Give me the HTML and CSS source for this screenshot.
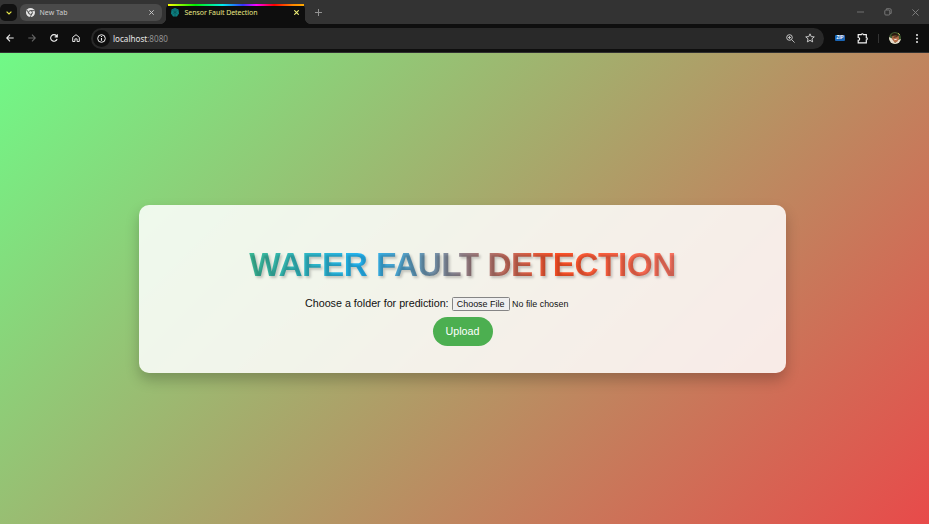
FILE: index.html
```html
<!DOCTYPE html>
<html lang="en">
<head>
<meta charset="utf-8">
<title>Sensor Fault Detection</title>
<link rel="stylesheet" href="styles.css">
</head>
<body>
<header class="browser">
  <div class="tabs">
    <div class="tab-search"><svg width="6" height="4" viewBox="0 0 6 4"><path d="M.6.6 3 3 5.400.6" fill="none" stroke="#e8e84a" stroke-width="1.2"/></svg></div>
    <div class="tab tab-idle">
      <svg class="favicon" width="9" height="9" viewBox="0 0 18 18"><circle cx="9" cy="9" r="9" fill="#e4e4e4"/><circle cx="9" cy="9" r="3.800" fill="#e4e4e4" stroke="#424242" stroke-width="1.700"/><path d="M9 5.200h8M5.700 10.900l-4-7M12.300 10.900l-4 7" stroke="#424242" stroke-width="1.700"/></svg>
      <span class="tab-title">New Tab</span>
      <svg width="5" height="5" viewBox="0 0 5 5"><path d="M.3.3l4.400 4.400M4.700.3.3 4.700" stroke="#d0d0d0" stroke-width=".9"/></svg>
    </div>
    <div class="tab tab-active">
      <svg class="favicon" width="8" height="9" viewBox="0 0 16 18"><path d="M8 0l7 3 1 8-4 6H4l-4-6 1-8z" fill="#0c7f80"/><path d="M3 5l5 3 5-3M8 8v8M3 12l5-4 5 4M5 2l3 3 3-3" fill="none" stroke="#075153" stroke-width="1.400"/></svg>
      <span class="tab-title">Sensor Fault Detection</span>
      <svg width="5" height="5" viewBox="0 0 5 5"><path d="M.3.3l4.400 4.400M4.700.3.3 4.700" stroke="#f0f078" stroke-width="1.100"/></svg>
    </div>
    <svg class="new-tab" width="7" height="7" viewBox="0 0 7 7"><path d="M3.500 0v7M0 3.500h7" stroke="#929292"/></svg>
    <div class="window-controls">
      <svg width="7" height="8" viewBox="0 0 7 8"><path d="M0 4h7" stroke="#707070"/></svg>
      <svg width="8" height="8" viewBox="0 0 8 8"><rect x=".8" y="2" width="5" height="5" rx="1" fill="none" stroke="#777"/><path d="M2.500 1.800V.7h3.300q1.400 0 1.400 1.400v3.300H6" fill="none" stroke="#777"/></svg>
      <svg width="7" height="7" viewBox="0 0 7 7"><path d="M.4.4l6.200 6.200M6.600.4.4 6.600" stroke="#858585" stroke-width=".9"/></svg>
    </div>
  </div>
  <div class="toolbar">
    <nav class="nav">
      <svg width="8" height="8" viewBox="0 0 8 8"><path d="M7.700 4H.8M4 .7.7 4 4 7.300" fill="none" stroke="#eee" stroke-width="1.100"/></svg>
      <svg width="8" height="8" viewBox="0 0 8 8"><path d="M.3 4h6.900M4 .7 7.300 4 4 7.300" fill="none" stroke="#666" stroke-width="1.100"/></svg>
      <svg width="8" height="8" viewBox="0 0 8 8"><path d="M7.100 5A3.300 3.300 0 1 1 6.500 1.800L7.200 2.600M7.300.3v2.600H4.700" fill="none" stroke="#eee" stroke-width="1.100"/></svg>
      <svg width="8" height="8" viewBox="0 0 8 8"><path d="M.7 7.500V3.300L4 .7l3.300 2.600v4.200H5.100V4.900H2.900v2.600z" fill="none" stroke="#e4e4e4"/></svg>
    </nav>
    <div class="address">
      <span class="site-info"><svg width="9" height="9" viewBox="0 0 9 9"><circle cx="4.500" cy="4.500" r="3.800" fill="none" stroke="#eee"/><path d="M4.500 4v2.700M4.500 2.100v1" stroke="#eee" stroke-width="1.100"/></svg></span>
      <span class="url">localhost<span class="port">:8080</span></span>
      <svg class="magnify" width="9" height="9" viewBox="0 0 9 9"><circle cx="3.500" cy="3.500" r="2.800" fill="none" stroke="#c6c6c6"/><path d="M5.600 5.600 8.600 8.600M2 3.500h3M3.500 2v3" stroke="#c6c6c6" stroke-width=".9"/></svg>
      <svg width="10" height="10" viewBox="0 0 18 18"><path d="M9 1.500l2.200 5 5.500.5-4.200 3.600 1.300 5.400L9 13.200 4.200 16l1.300-5.400L1.300 7l5.500-.5z" fill="none" stroke="#d0d0d0" stroke-width="1.700"/></svg>
    </div>
    <span class="zip">ZIP</span>
    <svg class="extensions" width="11" height="11" viewBox="0 0 11 11"><path d="M1.200 1.700h3c.1-1.300 2.200-1.300 2.300 0h2.800v3c1.300.1 1.300 2.200 0 2.300v2.800H1.200V7.400c1.900 0 1.900-2.900 0-2.900z" fill="none" stroke="#f2f2f2" stroke-width="1.200"/></svg>
    <span class="divider"></span>
    <svg class="avatar" width="12" height="12" viewBox="0 0 12 12"><defs><clipPath id="face"><circle cx="6" cy="6" r="6"/></clipPath></defs><g clip-path="url(#face)"><path fill="#3f5a30" d="M0 0h12v12H0z"/><path fill="#e8dccc" d="M0 5l4 2 2 4 3-3 3-1v5H0z"/><path fill="#b8704a" d="M3.500 3.500 9.500 3l.5 4-2 3-2.500.5L3 7z"/><path d="M2 4Q3 .8 6 1t4 3L6 3.500z" fill="#29190f"/><path d="M4.500 5.200l4-.6" stroke="#3a2016"/><path d="M5.200 7.700l2.500-.4" stroke="#fff" stroke-width=".8"/><path d="M9 1l2 2" stroke="#d9c45a"/></g></svg>
    <svg class="menu" width="2" height="9" viewBox="0 0 2 9"><g fill="#eee"><circle cx="1" cy="1.100" r="1"/><circle cx="1" cy="4.500" r="1"/><circle cx="1" cy="7.900" r="1"/></g></svg>
  </div>
</header>
<main class="page">
  <section class="card">
    <h1 class="title">WAFER FAULT DETECTION</h1>
    <form class="form">
      <div class="file-row">
        <label class="label">Choose a folder for prediction:</label>
        <button class="choose" type="button">Choose File</button>
        <span class="status">No file chosen</span>
      </div>
      <button class="upload" type="button">Upload</button>
    </form>
  </section>
</main>
</body>
</html>
```
FILE: styles.css
```css
* { box-sizing: border-box; }
body {
  margin: 0;
  height: 524px;
  overflow: hidden;
  display: flex;
  flex-direction: column;
  font-family: "Liberation Sans", Arial, sans-serif;
}
svg { display: block; flex: none; }
.browser {
  height: 53px;
  flex: none;
  background: #0e0e0e;
  border-bottom: 1px solid #303030;
  font-family: "Noto Sans", sans-serif;
}
.tabs { display: flex; height: 24px; background: #333; }
.tab-search {
  width: 17px;
  height: 17px;
  margin: 4px 3px 0 0;
  border-radius: 5px;
  background: #111;
  display: grid;
  place-items: center;
}
.tab { display: flex; align-items: center; font-size: 7px; }
.tab-title { flex: 1; white-space: nowrap; }
.tab-idle {
  width: 142px;
  height: 17px;
  margin-top: 4px;
  padding: 0 8px 0 5.500px;
  gap: 5px;
  border-radius: 6px;
  background: #4a4a4a;
  color: #cfcfcf;
}
.tab-active {
  width: 139px;
  height: 20px;
  margin: 4px 0 0 4px;
  padding: 0 6px 3px 5px;
  gap: 5.500px;
  background: #0e0e0e;
  color: #e8e884;
  border-radius: 5px 5px 0 0;
  position: relative;
}
.tab-active .tab-title { letter-spacing: -.06px; }
.tab-active::before {
  content: "";
  position: absolute;
  left: 2px;
  right: 1px;
  top: 0;
  height: 1.500px;
  background: linear-gradient(90deg, #ff0, #0e0 20%, #0ee 40%, #33f 55%, #f0f 65%, #f00 78%, #f80 92%, #fa0);
}
.tab-active::after {
  content: "";
  position: absolute;
  left: -5px;
  right: -5px;
  bottom: 0;
  height: 5px;
  background:
    radial-gradient(circle at 0 0, transparent 4.600px, #0e0e0e 5px) left / 5px 5px no-repeat,
    radial-gradient(circle at 100% 0, transparent 4.600px, #0e0e0e 5px) right / 5px 5px no-repeat;
}
.new-tab { margin: 9px 0 0 10px; }
.window-controls {
  display: flex;
  align-items: center;
  gap: 20px;
  margin-left: auto;
  padding-right: 10px;
}
.toolbar { display: flex; align-items: center; height: 28px; padding-right: 11.500px; }
.nav { display: flex; gap: 14px; padding-left: 5.500px; width: 91px; }
.address {
  width: 733px;
  height: 21px;
  padding: 0 9.500px 0 1.500px;
  border-radius: 11px;
  background: #292929;
  display: flex;
  align-items: center;
}
.site-info {
  width: 17px;
  height: 17px;
  border-radius: 50%;
  background: #0f0f0f;
  display: grid;
  place-items: center;
}
.url { margin-left: 3.500px; flex: 1; color: #e6e6e6; font-size: 8.100px; }
.port { color: #929292; }
.magnify { margin-right: 10px; }
.zip {
  width: 10px;
  height: 6px;
  margin-left: 11px;
  border-radius: 1px;
  background: #1a65b5;
  color: #fff;
  font: bold 4.500px/6px "Liberation Sans", sans-serif;
  text-align: center;
}
.extensions { margin-left: 12px; }
.divider { width: 1px; height: 9px; margin: 0 10px; background: #333; }
.menu { margin-left: auto; }
.page {
  flex: 1;
  padding-right: 4px;
  display: grid;
  place-items: center;
  background: linear-gradient(135deg, #70f987, #e84a4a);
}
.card {
  width: 647px;
  height: 168px;
  padding: 39px 26px 0;
  border-radius: 10px;
  background: rgba(255, 255, 255, .86);
  box-shadow: 0 7px 14px rgba(0, 0, 0, .22);
  text-align: center;
}
.title {
  margin: 0;
  font-size: 33.300px;
  line-height: 42px;
  letter-spacing: -.45px;
  white-space: nowrap;
  color: transparent;
  background: linear-gradient(90deg, #4caf50, #3bbb9b 15%, #25b9f8 33%, #ff5227 66%, #f98f90);
  background-clip: text;
  -webkit-background-clip: text;
  text-shadow: 1.700px 1.700px 2.600px rgba(0, 0, 0, .2);
}
.form { display: flex; flex-direction: column; align-items: center; }
.file-row {
  display: flex;
  align-items: center;
  align-self: flex-start;
  margin: 10px 0 0 140px;
  height: 16px;
  white-space: nowrap;
}
.label { font-size: 10.720px; line-height: 13px; margin-top: -1px; color: #111; }
.choose {
  width: 58px;
  height: 14px;
  margin: 0 2.500px 0 3px;
  padding: 0;
  border: 1px solid #858585;
  border-radius: 1.500px;
  background: #efefef;
  color: #111;
  font: 8.950px/12px "Liberation Sans", Arial, sans-serif;
}
.status { font-size: 8.900px; color: #111; }
.upload {
  width: 60px;
  height: 29px;
  margin-top: 5px;
  padding: 0 0 1px;
  border: 0;
  border-radius: 15px;
  background: #4caf50;
  color: #fff;
  font: 10.700px "Liberation Sans", Arial, sans-serif;
}
```
